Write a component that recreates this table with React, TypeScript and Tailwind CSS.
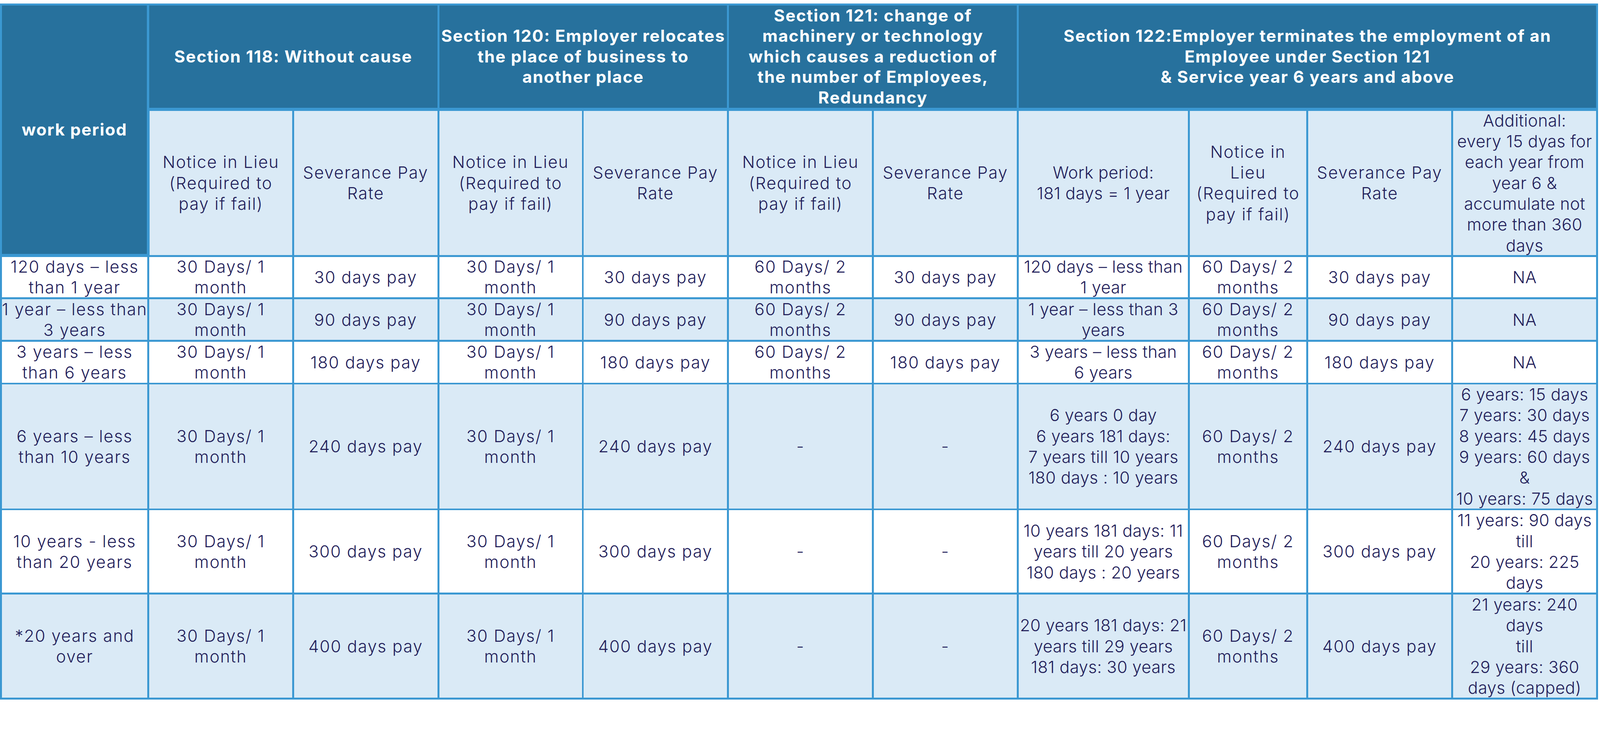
import React from 'react'

type CellDef = { lines: string[] }

// sizes are in vw so the table fills the page width exactly (100vw = 4223px of the picture)
const head =
  'bg-[#27719d] text-white font-bold leading-[1.2787vw] border-b-[0.0947vw] border-[#3b98d2]'
const sub = 'bg-[#daeaf6]'
// the two wide-text columns get tighter spacing so their long lines fit
const tight = 'tracking-[0.01em]'

const notice = ['Notice in Lieu', '(Required to', 'pay if fail)']
const sev = ['Severance Pay', 'Rate']
const m1 = ['30 Days/ 1', 'month']
const m2 = ['60 Days/ 2', 'months']

// one entry per data row, left to right
const rows: CellDef[][] = [
  [
    { lines: ['120 days – less', 'than 1 year'] },
    { lines: m1 },
    { lines: ['30 days pay'] },
    { lines: m1 },
    { lines: ['30 days pay'] },
    { lines: m2 },
    { lines: ['30 days pay'] },
    { lines: ['120 days – less than', '1 year'] },
    { lines: m2 },
    { lines: ['30 days pay'] },
    { lines: ['NA'] },
  ],
  [
    { lines: ['1 year – less than', '3 years'] },
    { lines: m1 },
    { lines: ['90 days pay'] },
    { lines: m1 },
    { lines: ['90 days pay'] },
    { lines: m2 },
    { lines: ['90 days pay'] },
    { lines: ['1 year – less than 3', 'years'] },
    { lines: m2 },
    { lines: ['90 days pay'] },
    { lines: ['NA'] },
  ],
  [
    { lines: ['3 years – less', 'than 6 years'] },
    { lines: m1 },
    { lines: ['180 days pay'] },
    { lines: m1 },
    { lines: ['180 days pay'] },
    { lines: m2 },
    { lines: ['180 days pay'] },
    { lines: ['3 years – less than', '6 years'] },
    { lines: m2 },
    { lines: ['180 days pay'] },
    { lines: ['NA'] },
  ],
  [
    { lines: ['6 years – less', 'than 10 years'] },
    { lines: m1 },
    { lines: ['240 days pay'] },
    { lines: m1 },
    { lines: ['240 days pay'] },
    { lines: ['-'] },
    { lines: ['-'] },
    {
      lines: [
        '6 years 0 day',
        '6 years 181 days:',
        '7 years till 10 years',
        '180 days : 10 years',
      ],
    },
    { lines: m2 },
    { lines: ['240 days pay'] },
    {
      lines: [
        '6 years: 15 days',
        '7 years: 30 days',
        '8 years: 45 days',
        '9 years: 60 days',
        '&',
        '10 years: 75 days',
      ],
    },
  ],
  [
    { lines: ['10 years - less', 'than 20 years'] },
    { lines: m1 },
    { lines: ['300 days pay'] },
    { lines: m1 },
    { lines: ['300 days pay'] },
    { lines: ['-'] },
    { lines: ['-'] },
    {
      lines: [
        '10 years 181 days: 11',
        'years till 20 years',
        '180 days : 20 years',
      ],
    },
    { lines: m2 },
    { lines: ['300 days pay'] },
    { lines: ['11 years: 90 days', 'till', '20 years: 225', 'days'] },
  ],
  [
    { lines: ['*20 years and', 'over'] },
    { lines: m1 },
    { lines: ['400 days pay'] },
    { lines: m1 },
    { lines: ['400 days pay'] },
    { lines: ['-'] },
    { lines: ['-'] },
    {
      lines: [
        '20 years 181 days: 21',
        'years till 29 years',
        '181 days: 30 years',
      ],
    },
    { lines: m2 },
    { lines: ['400 days pay'] },
    {
      lines: [
        '21 years: 240',
        'days',
        'till',
        '29 years: 360',
        'days (capped)',
      ],
    },
  ],
]

function Cell({ lines, className = '' }: { lines: string[]; className?: string }) {
  return (
    <div
      className={`flex flex-col items-center justify-center text-center overflow-x-clip ${className}`}
    >
      {lines.map((l, i) => (
        <div key={i} className="whitespace-nowrap">
          {l}
        </div>
      ))}
    </div>
  )
}

export default function App() {
  return (
    <div className="bg-white min-h-screen pt-[0.2131vw]">
      <div className="grid w-[99.882vw] gap-[0.1184vw] p-[0.1184vw] bg-[#3b98d2] grid-cols-[378fr_377.5fr_379fr_377fr_379fr_378fr_378fr_447fr_308fr_378fr_378.5fr] grid-rows-[6.4883vw_8.9983vw_2.5337vw_2.5456vw_2.5456vw_7.7433vw_5.1504vw_6.4528vw] font-[family-name:Inter,sans-serif] text-[1.0419vw] leading-[1.3024vw] tracking-[0.045em] font-light text-[#22205a]">
        {/* top header */}
        <Cell
          lines={['work period']}
          className="row-span-2 bg-[#27719d] text-white font-bold border-b-[0.0947vw] border-r-[0.047vw] border-[#3b98d2]"
        />
        <Cell lines={['Section 118: Without cause']} className={`col-span-2 ${head}`} />
        <Cell
          lines={['Section 120: Employer relocates', 'the place of business to', 'another place']}
          className={`col-span-2 ${head}`}
        />
        <Cell
          lines={[
            'Section 121: change of',
            'machinery or technology',
            'which causes a reduction of',
            'the number of Employees,',
            'Redundancy',
          ]}
          className={`col-span-2 ${head}`}
        />
        <Cell
          lines={[
            'Section 122:Employer terminates the employment of an',
            'Employee under Section 121',
            '& Service year 6 years and above',
          ]}
          className={`col-span-4 ${head}`}
        />

        {/* sub header */}
        <Cell lines={notice} className={`${sub} border-l-[0.047vw] border-[#3b98d2]`} />
        <Cell lines={sev} className={sub} />
        <Cell lines={notice} className={sub} />
        <Cell lines={sev} className={sub} />
        <Cell lines={notice} className={sub} />
        <Cell lines={sev} className={sub} />
        <Cell lines={['Work period:', '181 days = 1 year']} className={`${sub} ${tight}`} />
        <Cell lines={['Notice in', 'Lieu', '(Required to', 'pay if fail)']} className={sub} />
        <Cell lines={sev} className={sub} />
        <Cell
          lines={[
            'Additional:',
            'every 15 dyas for',
            'each year from',
            'year 6 &',
            'accumulate not',
            'more than 360',
            'days',
          ]}
          className={`${sub} ${tight}`}
        />

        {rows.map((row, r) =>
          row.map((c, i) => (
            <Cell
              key={`${r}-${i}`}
              lines={c.lines}
              className={`${r % 2 === 0 ? 'bg-white' : 'bg-[#daeaf6]'} ${
                i === 7 || i === 10 ? tight : ''
              }`}
            />
          )),
        )}
      </div>
    </div>
  )
}
